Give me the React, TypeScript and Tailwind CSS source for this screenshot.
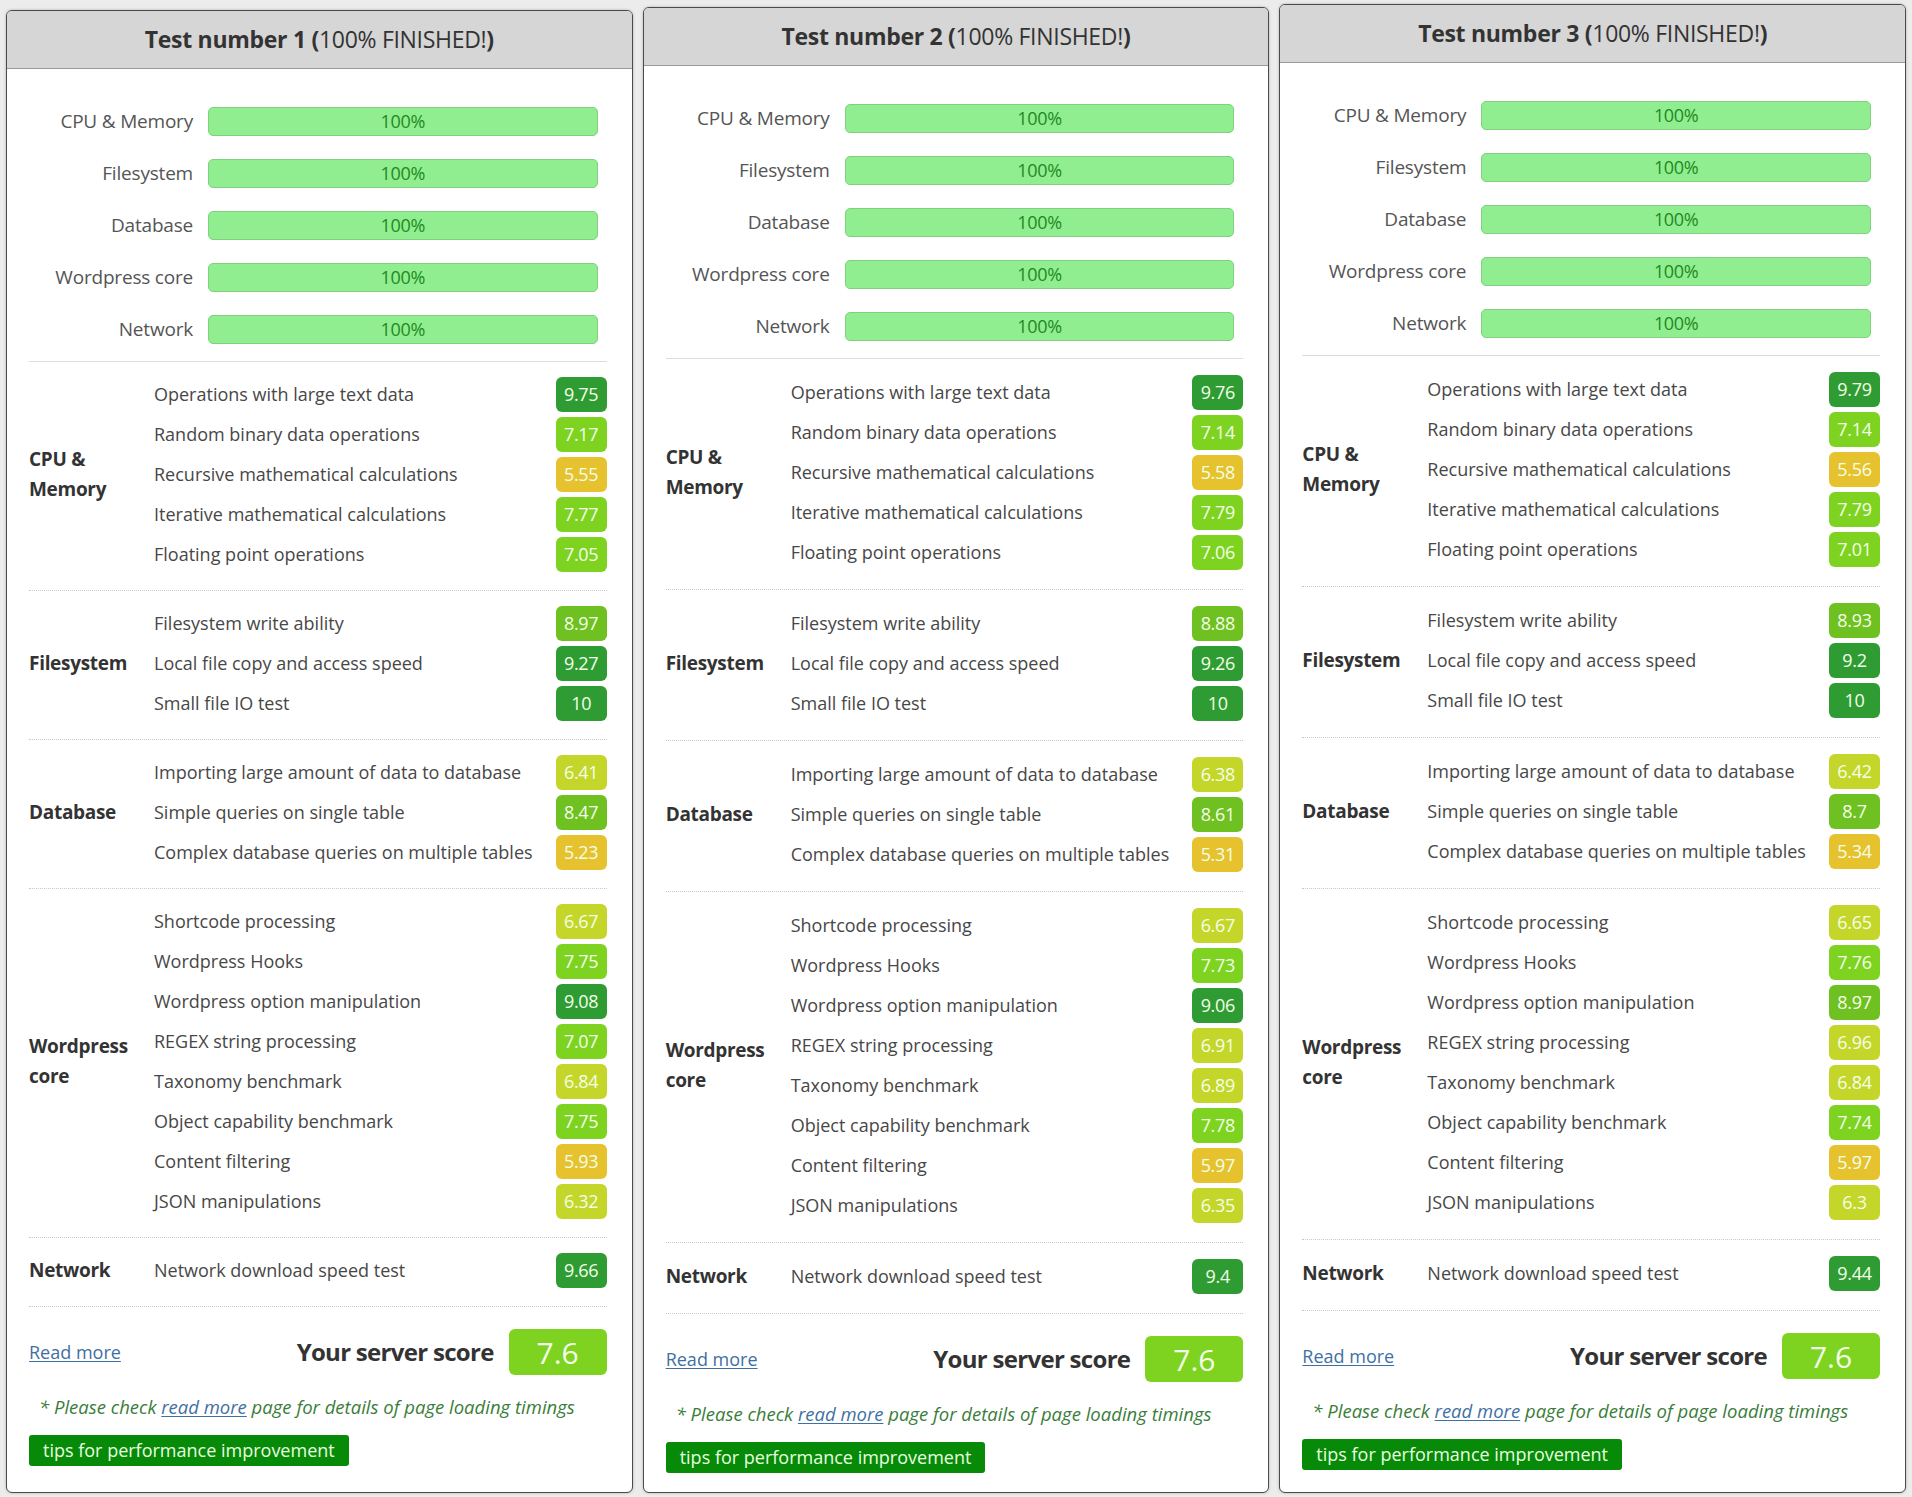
const TEST_GROUPS = [
  {
    name: "CPU & Memory",
    tests: [
      "Operations with large text data",
      "Random binary data operations",
      "Recursive mathematical calculations",
      "Iterative mathematical calculations",
      "Floating point operations",
    ],
  },
  {
    name: "Filesystem",
    tests: ["Filesystem write ability", "Local file copy and access speed", "Small file IO test"],
  },
  {
    name: "Database",
    tests: [
      "Importing large amount of data to database",
      "Simple queries on single table",
      "Complex database queries on multiple tables",
    ],
  },
  {
    name: "Wordpress core",
    tests: [
      "Shortcode processing",
      "Wordpress Hooks",
      "Wordpress option manipulation",
      "REGEX string processing",
      "Taxonomy benchmark",
      "Object capability benchmark",
      "Content filtering",
      "JSON manipulations",
    ],
  },
  { name: "Network", tests: ["Network download speed test"] },
];

const RUNS = [
  {
    num: 1,
    offset: "mt-[10px]",
    sectionPad: "pt-3 pb-4",
    scores: [
      ["9.75", "7.17", "5.55", "7.77", "7.05"],
      ["8.97", "9.27", "10"],
      ["6.41", "8.47", "5.23"],
      ["6.67", "7.75", "9.08", "7.07", "6.84", "7.75", "5.93", "6.32"],
      ["9.66"],
    ],
  },
  {
    num: 2,
    offset: "mt-[7px]",
    sectionPad: "pt-[13px] pb-[17px]",
    scores: [
      ["9.76", "7.14", "5.58", "7.79", "7.06"],
      ["8.88", "9.26", "10"],
      ["6.38", "8.61", "5.31"],
      ["6.67", "7.73", "9.06", "6.91", "6.89", "7.78", "5.97", "6.35"],
      ["9.4"],
    ],
  },
  {
    num: 3,
    offset: "mt-[4px]",
    sectionPad: "pt-[13px] pb-[17px]",
    scores: [
      ["9.79", "7.14", "5.56", "7.79", "7.01"],
      ["8.93", "9.2", "10"],
      ["6.42", "8.7", "5.34"],
      ["6.65", "7.76", "8.97", "6.96", "6.84", "7.74", "5.97", "6.3"],
      ["9.44"],
    ],
  },
];

function badgeColor(v: number) {
  if (v >= 9) return "bg-[#2f9c33]";
  if (v >= 8) return "bg-[#6fc021]";
  if (v >= 7) return "bg-[#7dd320]";
  if (v >= 6) return "bg-[#c5d62a]";
  return "bg-[#e6c22f]";
}

function ProgressRow({ label }: { label: string }) {
  return (
    <div className="flex items-center h-[29px]">
      <div className="w-[179px] pr-[15px] text-right text-[19px] tracking-[-0.2px] text-[#555]">{label}</div>
      <div className="flex-1 mr-[9px] h-full rounded-[5px] border border-[#7fd17f] bg-[#90ee90] flex items-center justify-center text-[18px] tracking-[-0.3px] text-[#1f8a1f]">
        100%
      </div>
    </div>
  );
}

function Card({ run }: { run: (typeof RUNS)[number] }) {
  return (
    <div className={`${run.offset} flex flex-col rounded-[6px] border border-[#4a4a4a] bg-white overflow-hidden shadow-[0_0_3px_rgba(0,0,0,0.25)]`}>
      <div className="h-[58px] shrink-0 bg-[#d6d6d6] border-b border-[#9a9a9a] flex items-center justify-center text-[23px] tracking-[-0.3px] text-[#333]">
        <span className="font-bold">Test number {run.num} (</span>
        <span>100% FINISHED!</span>
        <span className="font-bold">)</span>
      </div>

      <div className="pl-[22px] pr-[25px]">
        <div className="pt-[38px] pb-[17px] flex flex-col gap-[23px]">
          {TEST_GROUPS.map((g) => (
            <ProgressRow key={g.name} label={g.name} />
          ))}
        </div>

        {TEST_GROUPS.map((g, gi) => (
          <div
            key={g.name}
            className={`flex items-center ${run.sectionPad} border-t ${gi === 0 ? "border-solid border-[#dcdcdc]" : "border-dotted border-[#c8c8c8]"}`}
          >
            <div className="w-[125px] shrink-0 pr-[14px] text-[19px] font-bold leading-[30px] tracking-[-0.3px] text-[#333]">
              {g.name}
            </div>
            <div className="flex-1 flex flex-col">
              {g.tests.map((t, ti) => {
                const s = run.scores[gi][ti];
                return (
                  <div key={t} className="h-[40px] flex items-center justify-between">
                    <span className="text-[18px] text-[#474747]">{t}</span>
                    <span
                      className={`${badgeColor(parseFloat(s))} w-[51px] h-[35px] rounded-[6px] flex items-center justify-center text-[18px] tracking-[-0.3px] text-[#f3ffe8]`}
                    >
                      {s}
                    </span>
                  </div>
                );
              })}
            </div>
          </div>
        ))}

        <div className="border-t border-dotted border-[#c8c8c8] pt-[22px]">
          <div className="flex items-center justify-between">
            <a className="text-[18px] text-[#3f70a3] underline underline-offset-2">Read more</a>
            <div className="flex items-center gap-[15px]">
              <span className="text-[24px] font-bold tracking-[-0.7px] text-[#333]">Your server score</span>
              <span className="w-[98px] h-[46px] rounded-[6px] bg-[#7dd320] flex items-center justify-center text-[30px] text-[#f3ffe8]">
                7.6
              </span>
            </div>
          </div>
          <p className="mt-[18px] pl-[10px] text-[18.5px] italic text-[#3a7d3a]">
            * Please check <a className="text-[#3f70a3] underline underline-offset-2">read more</a> page for details of page
            loading timings
          </p>
          <button className="mt-[14px] h-[31px] px-[14px] rounded-[3px] bg-[#078a07] text-[18px] text-[#e8ffe0]">
            tips for performance improvement
          </button>
        </div>
      </div>
    </div>
  );
}

export default function App() {
  return (
    <div className="min-h-screen bg-[#ececec] px-[6px] pb-[4px] grid grid-cols-3 gap-[10px] font-['Open_Sans',sans-serif]">
      {RUNS.map((r) => (
        <Card key={r.num} run={r} />
      ))}
    </div>
  );
}
